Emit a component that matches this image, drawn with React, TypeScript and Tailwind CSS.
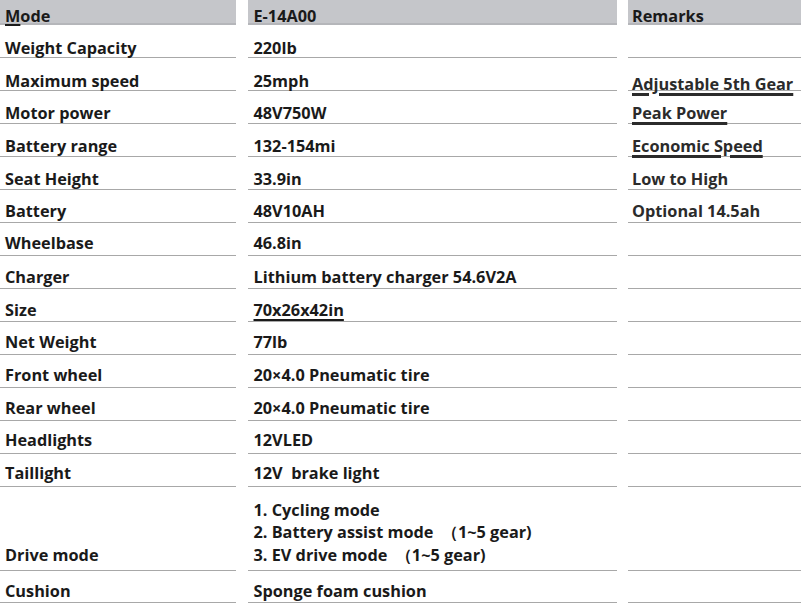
const ROWS: {
  label: string
  value: string
  remark?: string
  uValue?: boolean
  uRemark?: boolean
  pad: string
  rpad?: string
}[] = [
  { label: 'Weight Capacity', value: '220lb', pad: 'pb-0' },
  { label: 'Maximum speed', value: '25mph', remark: 'Adjustable 5th Gear', uRemark: true, pad: 'pb-0', rpad: 'pb-0 leading-[12px]' },
  { label: 'Motor power', value: '48V750W', remark: 'Peak Power', uRemark: true, pad: 'pb-[1px]', rpad: 'pb-[1px]' },
  { label: 'Battery range', value: '132-154mi', remark: 'Economic Speed', uRemark: true, pad: 'pb-[1px]', rpad: 'pb-[1px]' },
  { label: 'Seat Height', value: '33.9in', remark: 'Low to High', pad: 'pb-[1px]', rpad: 'pb-[1px]' },
  { label: 'Battery', value: '48V10AH', remark: 'Optional 14.5ah', pad: 'pb-[2px]', rpad: 'pb-[2px]' },
  { label: 'Wheelbase', value: '46.8in', pad: 'pb-[3px]' },
  { label: 'Charger', value: 'Lithium battery charger 54.6V2A', pad: 'pb-[2px]' },
  { label: 'Size', value: '70x26x42in', uValue: true, pad: 'pb-[2px]' },
  { label: 'Net Weight', value: '77lb', pad: 'pb-[3px]' },
  { label: 'Front wheel', value: '20×4.0 Pneumatic tire', pad: 'pb-[3px]' },
  { label: 'Rear wheel', value: '20×4.0 Pneumatic tire', pad: 'pb-[3px]' },
  { label: 'Headlights', value: '12VLED', pad: 'pb-[4px]' },
  { label: 'Taillight', value: '12V\u00a0 brake light', pad: 'pb-[4px]' },
]

const cell = 'flex items-end border-b-[1.5px] border-[#a8a8a8]'
const head = 'h-[25px] bg-[#c5c6ca] border-b-2 border-[#b5b6ba] pt-[5px] leading-[22px] whitespace-nowrap'

export default function App() {
  return (
    <div
      className="w-[801px] h-[607px] overflow-hidden bg-white text-[#1a1a1a] font-bold text-[16.3px] leading-[18px]"
      style={{ fontFamily: '"Open Sans", "Noto Sans", sans-serif' }}
    >
      <div className="grid grid-cols-[236px_369px_173px] gap-x-[11.5px]">
        {/* Header */}
        <div className={`${head} pl-[5px]`}>
          <span className="underline decoration-2 underline-offset-2">M</span>ode
        </div>
        <div className={`${head} pl-[6px]`}>E-14A00</div>
        <div className={`${head} pl-[4px]`}>Remarks</div>

        {ROWS.map(r => (
          <div key={r.label} className="contents">
            <div className={`${cell} h-[33px] pl-[5px] ${r.pad}`}>{r.label}</div>
            <div className={`${cell} h-[33px] pl-[6px] ${r.pad}`}>
              <span className={r.uValue ? 'underline decoration-2 underline-offset-[3px]' : ''}>{r.value}</span>
            </div>
            <div className={`${cell} h-[33px] pl-[4px] text-[#2b2b2b] ${r.rpad ?? ''}`}>
              {r.remark && (
                <span className={r.uRemark ? 'underline decoration-[2.5px] underline-offset-[3px]' : ''}>{r.remark}</span>
              )}
            </div>
          </div>
        ))}

        {/* Drive mode */}
        <div className={`${cell} h-[84px] pl-[5px] pb-[6px]`}>Drive mode</div>
        <div className={`${cell} h-[84px] pl-[6px] pb-[4px] flex-col items-start justify-end leading-[22.5px]`}>
          <div>1. Cycling mode</div>
          <div>2. Battery assist mode&nbsp; （1~5 gear)</div>
          <div>3. EV drive mode&nbsp; （1~5 gear)</div>
        </div>
        <div className={`${cell} h-[84px]`} />

        <div className={`${cell} h-[32px] pl-[5px] pb-[2px]`}>Cushion</div>
        <div className={`${cell} h-[32px] pl-[6px] pb-[2px]`}>Sponge foam cushion</div>
        <div className={`${cell} h-[32px]`} />
      </div>
    </div>
  )
}
